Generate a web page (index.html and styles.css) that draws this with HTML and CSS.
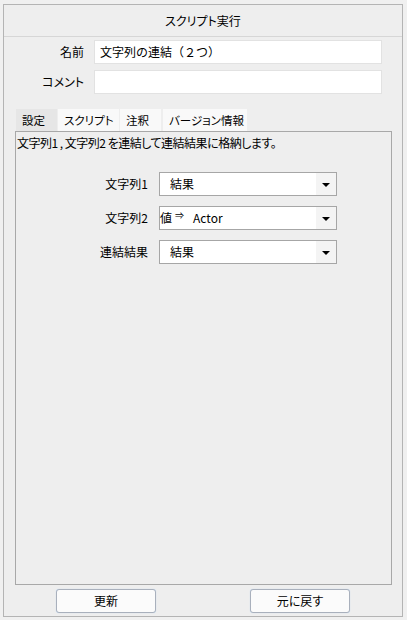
FILE: index.html
```html
<!DOCTYPE html>
<html lang="ja">
<head>
<meta charset="utf-8">
<link rel="stylesheet" href="styles.css">
</head>
<body>
<div class="window">
  <div class="title">スクリプト実行</div>
  <div class="form">
    <label class="flabel">名前</label>
    <div class="finput name">文字列の連結（２つ）</div>
    <label class="flabel">コメント</label>
    <div class="finput"></div>
  </div>
  <div class="tabs">
    <div class="tab active t1">設定</div>
    <div class="tab t2">スクリプト</div>
    <div class="tab t3">注釈</div>
    <div class="tab t4">バージョン情報</div>
  </div>
  <div class="panel">
    <div class="desc">文字列1 , 文字列2 を連結して連結結果に格納します。</div>
    <div class="params">
      <div class="plabel">文字列1</div>
      <div class="select"><span class="val">結果</span><span class="arrow"></span></div>
      <div class="plabel">文字列2</div>
      <div class="select"><span class="val val2"><span class="kind">値</span><span class="imp">⇒</span>Actor</span><span class="arrow"></span></div>
      <div class="plabel">連結結果</div>
      <div class="select"><span class="val">結果</span><span class="arrow"></span></div>
    </div>
  </div>
  <div class="buttons">
    <button class="btn b1">更新</button>
    <button class="btn b2">元に戻す</button>
  </div>
</div>
</body>
</html>
```
FILE: styles.css
```css
* { box-sizing: border-box; }
html, body { margin: 0; padding: 0; }
body {
  background: #f0f0f0;
  font-family: "Noto Sans CJK JP", "Noto Sans", sans-serif;
  font-size: 12px;
  font-feature-settings: "palt";
  color: #000;
  width: 407px;
  height: 620px;
  overflow: hidden;
}
.window {
  margin: 4px 4px 0 3px;
  width: 400px;
  height: 613px;
  border: 1px solid #b4b4b4;
  background: #eeeeee;
  display: flex;
  flex-direction: column;
}
.title {
  height: 32px;
  border-bottom: 1px solid #d6d6d6;
  display: flex;
  align-items: center;
  justify-content: center;
  line-height: 16px;
  padding-top: 1px;
}
.form {
  display: grid;
  grid-template-columns: 80px 288px;
  column-gap: 10px;
  row-gap: 6px;
  padding-top: 3px;
  align-items: center;
}
.flabel {
  text-align: right;
  line-height: 16px;
}
.finput {
  height: 24px;
  background: #fff;
  border: 1px solid #e2e2e2;
  padding: 0 5px;
  line-height: 21px;
}
.finput.name { font-feature-settings: normal; }
.tabs {
  display: flex;
  margin-top: 15px;
  padding-left: 12px;
  height: 22px;
  gap: 1px;
}
.tab {
  background: #f9f9f9;
  line-height: 22px;
  font-size: 11.5px;
  padding: 0 0 0 6px;
  white-space: nowrap;
  overflow: hidden;
}
.tab.active { background: #e6e6e6; }
.t1 { width: 41px; }
.t2 { width: 61px; }
.t3 { width: 41px; }
.t4 { width: 84px; margin-left: 1px; }
.panel {
  margin-left: 11px;
  width: 377px;
  flex: 1;
  border: 1px solid #a8a8a8;
  background: #eeeeee;
}
.desc {
  padding: 3px 0 0 1px;
  line-height: 16px;
  letter-spacing: -0.5px;
  white-space: nowrap;
}
.params {
  display: grid;
  grid-template-columns: 132px 178px;
  column-gap: 11px;
  row-gap: 10px;
  margin-top: 21px;
  align-items: center;
}
.plabel {
  text-align: right;
  line-height: 16px;
}
.select {
  height: 24px;
  background: #fff;
  border: 1px solid #a6a6a6;
  display: flex;
  align-items: stretch;
}
.val {
  flex: 1;
  padding-left: 10px;
  line-height: 22px;
}
.val2 { padding-left: 0; display: flex; align-items: center; }
.kind { margin-right: 3px; }
.imp { font-size: 9px; margin-right: 9px; line-height: 10px; position: relative; top: -2px; }
.arrow {
  width: 20px;
  background: #f4f4f4;
  position: relative;
}
.arrow::after {
  content: "";
  position: absolute;
  left: 6px;
  top: 10px;
  border-left: 4px solid transparent;
  border-right: 4px solid transparent;
  border-top: 4px solid #000;
}
.buttons {
  height: 24px;
  margin: 4px 0 3px;
  display: flex;
}
.btn {
  height: 24px;
  width: 100px;
  border: 1px solid #a9b0bc;
  border-radius: 3px;
  background: #fbfbfb;
  box-shadow: 0 0 1px 0 #b9d4f2;
  font-family: "Noto Sans CJK JP", "Noto Sans", sans-serif;
  font-size: 12px;
  font-feature-settings: "palt";
  line-height: 16px;
  color: #000;
  padding: 0;
}
.b1 { margin-left: 52px; }
.b2 { margin-left: 94px; }
```
